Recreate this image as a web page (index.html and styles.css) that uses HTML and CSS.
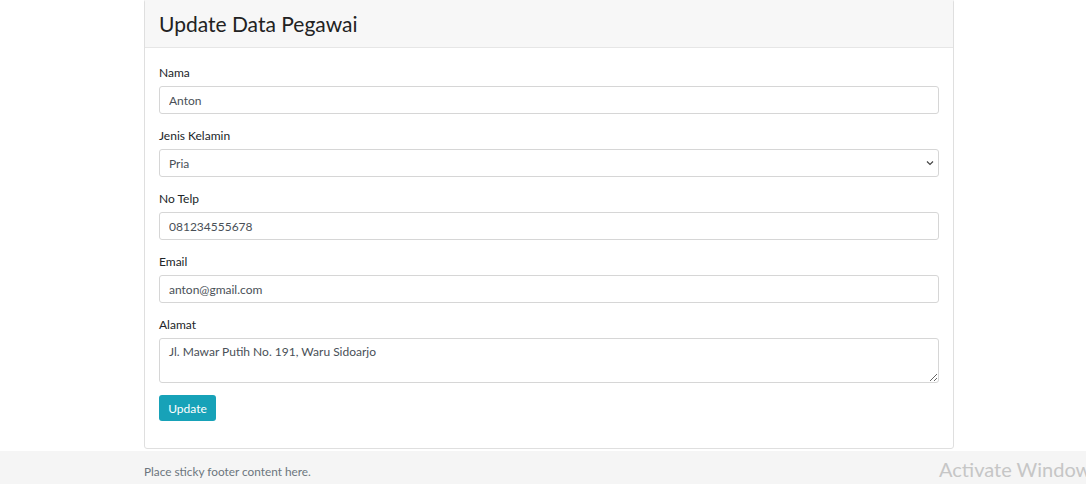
FILE: index.html
```html
<!DOCTYPE html>
<html>
<head>
<meta charset="utf-8">
<link rel="stylesheet" href="styles.css">
</head>
<body>
<main class="container">
  <div class="card">
    <div class="card-header"><h3 class="title">Update Data Pegawai</h3></div>
    <form class="card-body">
      <div class="group">
        <label>Nama</label>
        <input class="control" type="text" value="Anton">
      </div>
      <div class="group">
        <label>Jenis Kelamin</label>
        <div class="select control">
          <span>Pria</span>
          <svg width="8" height="6" viewBox="0 0 8 6"><path d="M1 1.5 L4 4.5 L7 1.5" fill="none" stroke="#444" stroke-width="1.2"/></svg>
        </div>
      </div>
      <div class="group">
        <label>No Telp</label>
        <input class="control" type="text" value="081234555678">
      </div>
      <div class="group">
        <label>Email</label>
        <input class="control" type="text" value="anton@gmail.com">
      </div>
      <div class="group">
        <label>Alamat</label>
        <textarea class="control area">Jl. Mawar Putih No. 191, Waru Sidoarjo</textarea>
      </div>
      <button class="btn" type="button">Update</button>
    </form>
  </div>
</main>
<footer class="footer">
  <div class="container"><span class="muted">Place sticky footer content here.</span></div>
  <div class="watermark">Activate Windows</div>
</footer>
</body>
</html>
```
FILE: styles.css
```css
* { box-sizing: border-box; }
html, body { margin: 0; padding: 0; }
body {
  font-family: "Lato", "Noto Sans", sans-serif;
  font-size: 12px;
  color: #212529;
  background: #fff;
  height: 484px;
  overflow: hidden;
  position: relative;
}
.container {
  width: 810px;
  margin-left: 144px;
}
.card {
  margin-top: -1px;
  border: 1px solid #dfdfdf;
  border-radius: 3px;
  background: #fff;
  height: 450px;
}
.card-header {
  background: #f7f7f7;
  border-bottom: 1px solid #e6e6e6;
  height: 48px;
  padding: 0 14px;
  display: flex;
  align-items: center;
}
.title {
  margin: 0;
  font-weight: 400;
  font-size: 21px;
  color: #222;
}
.card-body {
  padding: 16px 14px 0 14px;
  display: flex;
  flex-direction: column;
}
.group {
  display: flex;
  flex-direction: column;
  margin-bottom: 13px;
}
.group label {
  font-size: 12px;
  line-height: 18px;
  margin-bottom: 4px;
  color: #212529;
}
.control {
  height: 28px;
  border: 1px solid #d6d6d6;
  border-radius: 3px;
  padding: 0 9px;
  font-family: inherit;
  font-size: 12px;
  color: #495057;
  background: #fff;
  outline: none;
}
.select {
  display: flex;
  align-items: center;
  justify-content: space-between;
  padding-right: 4px;
}
.area {
  height: 45px;
  padding: 5px 9px;
  resize: vertical;
  line-height: 16px;
}
.btn {
  align-self: flex-start;
  margin-top: -1px;
  height: 26px;
  width: 57px;
  border: none;
  border-radius: 3px;
  background: #17a2b8;
  color: #fff;
  font-family: inherit;
  font-size: 12px;
  padding: 0;
}
.footer {
  margin-top: 2px;
  height: 40px;
  background: #f5f5f5;
  display: flex;
  align-items: center;
}
.muted {
  color: #6c757d;
  font-size: 11.8px;
}
.watermark {
  position: absolute;
  left: 939px;
  top: 457px;
  font-size: 20px;
  color: #c6c6c6;
  white-space: nowrap;
}
```
